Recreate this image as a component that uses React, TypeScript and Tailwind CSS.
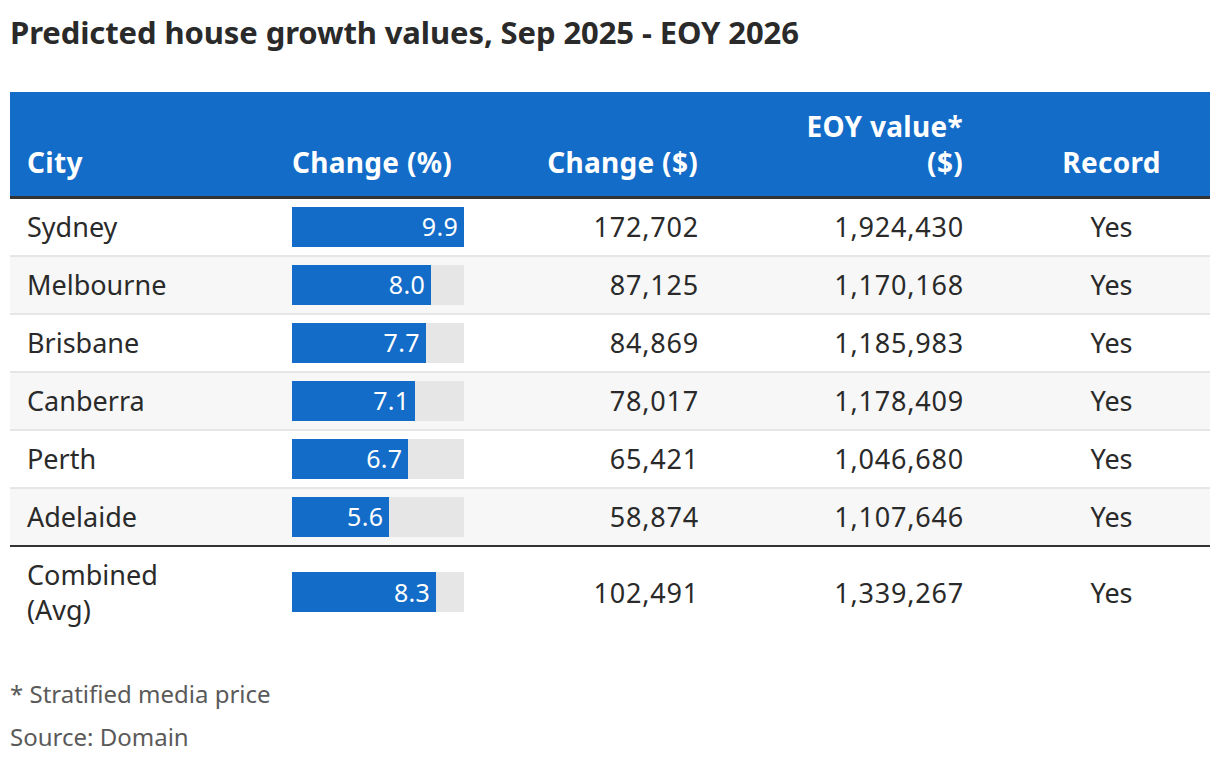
import React from "react";

const rows = [
  { city: "Sydney", pct: 9.9, chg: "172,702", eoy: "1,924,430", rec: "Yes" },
  { city: "Melbourne", pct: 8.0, chg: "87,125", eoy: "1,170,168", rec: "Yes" },
  { city: "Brisbane", pct: 7.7, chg: "84,869", eoy: "1,185,983", rec: "Yes" },
  { city: "Canberra", pct: 7.1, chg: "78,017", eoy: "1,178,409", rec: "Yes" },
  { city: "Perth", pct: 6.7, chg: "65,421", eoy: "1,046,680", rec: "Yes" },
  { city: "Adelaide", pct: 5.6, chg: "58,874", eoy: "1,107,646", rec: "Yes" },
];

function Bar({ v }: { v: number }) {
  return (
    <div className="h-[40px] w-[172px] bg-[#e6e6e6]">
      <div
        className="h-full bg-[#136cc8] flex items-center justify-end pr-[6px] text-white text-[25px] tracking-[0.3px]"
        style={{ width: `${(v / 9.9) * 172}px` }}
      >
        {v.toFixed(1)}
      </div>
    </div>
  );
}

export default function App() {
  return (
    <div
      className="w-[1220px] h-[764px] bg-white text-[#2a2a2a] pt-[11px]"
      style={{ fontFamily: '"Noto Sans", sans-serif' }}
    >
      <h1 className="pl-[10px] text-[31px] leading-[42px] font-bold tracking-[-0.1px] text-[#2a2a2a]">
        Predicted house growth values, Sep 2025 - EOY 2026
      </h1>
      <div className="mx-[10px] mt-[39px]">
        <div className="grid grid-cols-[282px_172px_234px_265px_247px] h-[107px] bg-[#136cc8] border-b-[3px] border-[#333] text-white font-bold text-[28px] leading-[36px] items-end pb-[16px] tracking-[0.3px]">
          <div className="pl-[17px]">City</div>
          <div>Change (%)</div>
          <div className="text-right">Change ($)</div>
          <div className="text-right">
            EOY value*
            <br />
            ($)
          </div>
          <div className="pl-[50px] text-center">Record</div>
        </div>
        {rows.map((r, i) => (
          <div
            key={r.city}
            className={`grid grid-cols-[282px_172px_234px_265px_247px] h-[58px] items-center text-[27px] ${
              i % 2 === 1 ? "bg-[#f7f7f7]" : "bg-white"
            } ${i < rows.length - 1 ? "border-b-2 border-[#e6e6e6]" : "border-b-2 border-[#333]"}`}
          >
            <div className="pl-[17px]">{r.city}</div>
            <Bar v={r.pct} />
            <div className="text-right tracking-[0.8px] -mr-[1px]">{r.chg}</div>
            <div className="text-right tracking-[0.8px] -mr-[1px]">{r.eoy}</div>
            <div className="pl-[50px] text-center">{r.rec}</div>
          </div>
        ))}
        <div className="grid grid-cols-[282px_172px_234px_265px_247px] py-[10px] items-center text-[27px] leading-[35px]">
          <div className="pl-[17px]">
            Combined
            <br />
            (Avg)
          </div>
          <Bar v={8.3} />
          <div className="text-right tracking-[0.8px] -mr-[1px]">102,491</div>
          <div className="text-right tracking-[0.8px] -mr-[1px]">1,339,267</div>
          <div className="pl-[50px] text-center">Yes</div>
        </div>
      </div>
      <div className="pl-[10px] mt-[35px] text-[24px] leading-[43px] text-[#5a5a5a]">
        <div>* Stratified media price</div>
        <div>Source: Domain</div>
      </div>
    </div>
  );
}
